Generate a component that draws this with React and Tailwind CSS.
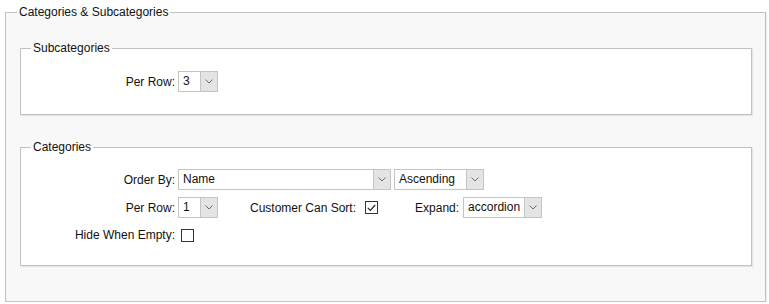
import React from "react";

function Select({ value, width }) {
  return (
    <div
      className="flex h-[21px] border border-[#c4c4c4] bg-white"
      style={{ width }}
    >
      <span className="flex-1 px-[4px] leading-[19px]">{value}</span>
      <span className="flex w-[17px] items-center justify-center border-l border-[#c4c4c4] bg-[#e4e4e4]">
        <svg width="8" height="5" viewBox="0 0 8 5" fill="none">
          <path d="M0.5 0.5 L4 4 L7.5 0.5" stroke="#6b6b6b" strokeWidth="1" />
        </svg>
      </span>
    </div>
  );
}

function Checkbox({ checked }) {
  return (
    <span className="flex h-[13px] w-[13px] items-center justify-center border border-[#333] bg-white">
      {checked && (
        <svg width="9" height="8" viewBox="0 0 9 8" fill="none">
          <path d="M0.8 3.8 L3.3 6.3 L8.2 1" stroke="#222" strokeWidth="1.2" />
        </svg>
      )}
    </span>
  );
}

export default function App() {
  return (
    <div
      className="bg-white pl-[5px] pr-[3px] pt-[3px] text-[12px] text-[#111]"
      style={{ fontFamily: '"Liberation Sans", Arial, sans-serif' }}
    >
      <fieldset className="h-[299px] border border-[#c2c2c2] bg-[#f8f8f8] pl-[14px] pr-[13px] shadow-[1px_1px_1px_rgba(0,0,0,0.08)]">
        <legend className="-ml-[3px] px-[2px]">Categories &amp; Subcategories</legend>

        <fieldset className="mt-[18px] h-[76px] border border-[#c2c2c2] bg-white shadow-[1px_1px_1px_rgba(0,0,0,0.08)]">
          <legend className="ml-[10px] px-[2px]">Subcategories</legend>
          <div className="mt-[14px] flex items-center">
            <span className="w-[157px] pr-[3px] text-right">Per Row:</span>
            <Select value="3" width={40} />
          </div>
        </fieldset>

        <fieldset className="mt-[23px] h-[128px] border border-[#c2c2c2] bg-white shadow-[1px_1px_1px_rgba(0,0,0,0.08)]">
          <legend className="ml-[10px] px-[2px]">Categories</legend>
          <div className="mt-[13px] flex flex-col gap-[7px]">
            <div className="flex items-center">
              <span className="w-[157px] pr-[3px] text-right">Order By:</span>
              <Select value="Name" width={213} />
              <span className="w-[3px]" />
              <Select value="Ascending" width={90} />
            </div>
            <div className="flex items-center">
              <span className="w-[157px] pr-[3px] text-right">Per Row:</span>
              <Select value="1" width={40} />
              <span className="ml-[32px]">Customer Can Sort:</span>
              <span className="ml-[9px]">
                <Checkbox checked />
              </span>
              <span className="ml-[37px]">Expand:</span>
              <span className="ml-[4px]">
                <Select value="accordion" width={79} />
              </span>
            </div>
            <div className="mt-[1px] flex items-center">
              <span className="w-[160px] pr-[6px] text-right">Hide When Empty:</span>
              <Checkbox />
            </div>
          </div>
        </fieldset>
      </fieldset>
    </div>
  );
}
